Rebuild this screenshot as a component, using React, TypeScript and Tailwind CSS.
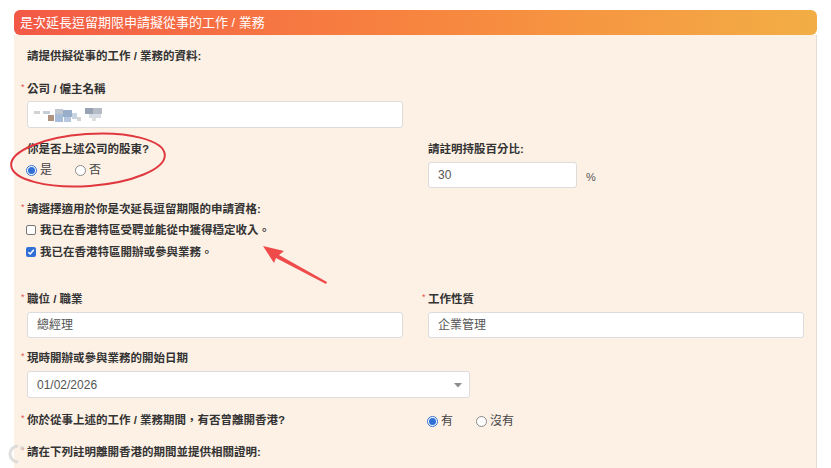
import React from "react";

const Star = () => (
  <span className="-ml-[6px] inline-block w-[6px] text-[9px] font-normal leading-[12px] text-[#e5534b] align-top">*</span>
);

const RadioOn = () => (
  <span className="inline-flex h-[11px] w-[11px] shrink-0 rounded-full border-[1.5px] border-[#2f6fd6] bg-white p-[1px]">
    <span className="h-full w-full rounded-full bg-[#2f6fd6]" />
  </span>
);

const RadioOff = () => (
  <span className="inline-block h-[11px] w-[11px] shrink-0 rounded-full border border-[#8a8a8a] bg-white" />
);

const Radio = ({ on, label }: { on: boolean; label: string }) => (
  <span className="flex items-center gap-[3px] text-[12px] font-normal text-[#444]">
    {on ? <RadioOn /> : <RadioOff />}
    <span className="leading-[16px]">{label}</span>
  </span>
);

const Check = ({ on, label }: { on: boolean; label: string }) => (
  <div className="-ml-[1px] flex h-[16px] items-center gap-[4px]">
    {on ? (
      <span className="flex h-[10px] w-[10px] shrink-0 items-center justify-center rounded-[2px] bg-[#2f6fd6]">
        <svg width="8" height="8" viewBox="0 0 8 8">
          <path d="M1.3 4.2 L3.2 6 L6.8 1.8" stroke="#fff" strokeWidth="1.5" fill="none" />
        </svg>
      </span>
    ) : (
      <span className="inline-block h-[10px] w-[10px] shrink-0 rounded-[2px] border border-[#777] bg-white" />
    )}
    <span className="text-[11.5px] font-bold leading-[16px] text-[#333]">{label}</span>
  </div>
);

const Label = ({ children, star }: { children: React.ReactNode; star?: boolean }) => (
  <div className="h-[16px] text-[11.5px] font-bold leading-[16px] text-[#333]">
    {star && <Star />}
    {children}
  </div>
);

const Input = ({ value, className = "" }: { value?: string; className?: string }) => (
  <div
    className={
      "flex items-center rounded-[3px] border border-[#dcdcdc] bg-white pl-[9px] text-[12px] text-[#555] " + className
    }
  >
    {value}
  </div>
);

export default function App() {
  return (
    <div className="relative h-[468px] w-[831px] overflow-hidden bg-white font-['Liberation_Sans','Noto_Sans_CJK_TC',sans-serif]">
      <div className="ml-[14px] mt-[10px] w-[803px]">
        <div className="flex h-[25px] items-center rounded-[6px] bg-gradient-to-r from-[#f35846] via-[#f7843f] to-[#f2ae45] pl-[6px] text-[13px] text-white">
          是次延長逗留期限申請擬從事的工作 / 業務
        </div>
        <div className="border-r border-[#e4ddd6] bg-[#fdf1e6] px-[13px] pb-[8px] pt-[13px]">
          <Label>請提供擬從事的工作 / 業務的資料:</Label>

          <div className="mt-[17px]">
            <Label star>公司 / 僱主名稱</Label>
          </div>
          <div className="mt-[4px] flex h-[27px] w-[376px] items-center rounded-[3px] border border-[#dcdcdc] bg-white pl-[6px]">
            <svg width="84" height="14" viewBox="0 0 84 14">
              <rect x="0" y="3" width="6" height="3" fill="#d2d2d2" />
              <rect x="9" y="3" width="7" height="3" fill="#c5ced8" />
              <rect x="14" y="7" width="6" height="6" fill="#b0937f" />
              <rect x="21" y="1" width="8" height="5" fill="#bfc6cd" />
              <rect x="21" y="6" width="8" height="8" fill="#a6bcd8" />
              <rect x="29" y="2" width="9" height="7" fill="#98aecb" />
              <rect x="38" y="5" width="5" height="6" fill="#c9d4e2" />
              <rect x="30" y="9" width="7" height="5" fill="#b6c7de" />
              <rect x="43" y="9" width="4" height="4" fill="#d4d4d4" />
              <rect x="51" y="0" width="8" height="6" fill="#97a3b0" />
              <rect x="59" y="0" width="9" height="6" fill="#b5bcc5" />
              <rect x="55" y="6" width="12" height="4" fill="#d6dde5" />
              <rect x="58" y="10" width="4" height="3" fill="#dedede" />
            </svg>
          </div>

          <div className="mt-[13px] grid grid-cols-[376px_376px] gap-x-[25px]">
            <div>
              <Label>你是否上述公司的股東?</Label>
              <div className="-ml-[1px] mt-[5px] flex h-[16px] items-center gap-[23px]">
                <Radio on label="是" />
                <Radio on={false} label="否" />
              </div>
            </div>
            <div>
              <Label>請註明持股百分比:</Label>
              <div className="mt-[5px] flex items-center">
                <Input value="30" className="h-[26px] w-[149px]" />
                <span className="ml-[9px] mt-[4px] text-[11px] text-[#555]">%</span>
              </div>
            </div>
          </div>

          <div className="mt-[13px]">
            <Label star>請選擇適用於你是次延長逗留期限的申請資格:</Label>
          </div>
          <div className="mt-[5px]">
            <Check on={false} label="我已在香港特區受聘並能從中獲得穩定收入。" />
          </div>
          <div className="mt-[6px]">
            <Check on label="我已在香港特區開辦或參與業務。" />
          </div>

          <div className="mt-[31px] grid grid-cols-[376px_376px] gap-x-[25px]">
            <div>
              <Label star>職位 / 職業</Label>
              <Input value="總經理" className="mt-[5px] h-[26px] w-[376px]" />
            </div>
            <div>
              <Label star>工作性質</Label>
              <Input value="企業管理" className="mt-[5px] h-[26px] w-[376px]" />
            </div>
          </div>

          <div className="mt-[12px]">
            <Label star>現時開辦或參與業務的開始日期</Label>
          </div>
          <div className="mt-[5px] flex h-[27px] w-[443px] items-center justify-between rounded-[3px] border border-[#dcdcdc] bg-white pl-[9px] pr-[7px] text-[12px] text-[#555]">
            <span>01/02/2026</span>
            <svg width="8" height="5" viewBox="0 0 8 5" className="mt-[2px]">
              <path d="M0 0 L8 0 L4 4.5 Z" fill="#8c8c8c" />
            </svg>
          </div>

          <div className="mt-[14px] grid grid-cols-[376px_376px] gap-x-[25px]">
            <Label star>你於從事上述的工作 / 業務期間，有否曾離開香港?</Label>
            <div className="-ml-[1px] mt-[1px] flex h-[16px] items-center gap-[23px]">
              <Radio on label="有" />
              <Radio on={false} label="沒有" />
            </div>
          </div>

          <div className="mt-[15px]">
            <Label star>請在下列註明離開香港的期間並提供相關證明:</Label>
          </div>
        </div>
      </div>

      {/* watermark */}
      <svg className="absolute left-[4px] top-[443px]" width="28" height="22" viewBox="0 0 28 22">
        <path d="M14 3 A8 8 0 1 0 14 19" stroke="#d6d6d6" strokeWidth="3" fill="none" opacity="0.8" />
        <circle cx="18" cy="5" r="2" fill="#d6d6d6" opacity="0.8" />
      </svg>

      {/* annotation ellipse */}
      <svg className="pointer-events-none absolute left-0 top-0" width="831" height="468" viewBox="0 0 831 468">
        <ellipse
          cx="88"
          cy="160"
          rx="77"
          ry="26"
          transform="rotate(-4 88 160)"
          fill="none"
          stroke="#e0383f"
          strokeWidth="2"
        />
        <polygon points="263,246 284,251 279,255 327,282 326,284 276,258 274,263" fill="#ef4b4b" />
      </svg>
    </div>
  );
}
